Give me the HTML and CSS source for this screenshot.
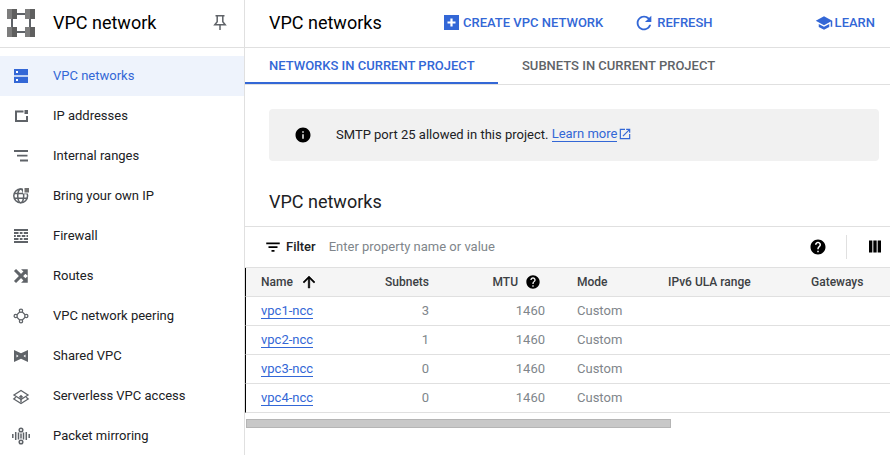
FILE: index.html
```html
<!DOCTYPE html>
<html lang="en">
<head>
<meta charset="utf-8">
<title>VPC networks</title>
<link rel="stylesheet" href="styles.css">
</head>
<body>
<div class="app">
  <aside class="sidebar">
    <div class="side-head">
      <svg class="logo" viewBox="0 0 28 28" width="28" height="28">
        <path fill="#5f6368" d="M10 4h8v2h-8zM10 22h8v2h-8zM4 10h2v8H4zM22 10h2v8h-2z"/>
        <path fill="#7d7d7d" d="M0 0h5v10H0zM18 0h5v10h-5zM0 18h5v10H0zM18 18h5v10h-5z"/>
        <path fill="#5f5f5f" d="M5 0h5v10H5zM23 0h5v10h-5zM5 18h5v10H5zM23 18h5v10h-5z"/>
      </svg>
      <span class="side-title">VPC network</span>
      <svg class="pin" viewBox="0 0 18 18" width="18" height="18"><path fill="none" stroke="#5f6368" stroke-width="1.500" d="M4.500 1.800h9M6.200 1.800v6L3.800 10.800h10.400L11.800 7.800v-6M9 10.800V16"/></svg>
    </div>
    <nav class="nav">
      <a class="nav-item active">
        <svg class="nav-icon" viewBox="0 0 18 18"><path fill="#3367d6" d="M2 2h14v6.200H2zM2 9.800h14V16H2z"/><path fill="#fff" d="M4 4h2v2H4zM4 12h2v2H4z"/></svg>
        <span>VPC networks</span></a>
      <a class="nav-item">
        <svg class="nav-icon" viewBox="0 0 18 18"><path fill="#5f6368" d="M3 3.500h8.500v2H5V13h9V9h2v6H3z"/><rect fill="#5f6368" x="12.500" y="3" width="3.500" height="4"/></svg>
        <span>IP addresses</span></a>
      <a class="nav-item">
        <svg class="nav-icon" viewBox="0 0 18 18"><path fill="#5f6368" d="M2 3h14v2H2zM5 7.800h10.500v1.800H5zM8 12.500h8v2H8z"/></svg>
        <span>Internal ranges</span></a>
      <a class="nav-item">
        <svg class="nav-icon" viewBox="0 0 18 18"><g fill="none" stroke="#5f6368" stroke-width="1.500"><circle cx="8.700" cy="8.800" r="6.900"/><ellipse cx="8.700" cy="8.800" rx="3" ry="6.900"/><path d="M2 6.400h13.400M2 11.200h13.400"/></g><rect x="11" y="0" width="7" height="6.500" fill="#fff"/><rect x="12.500" y="1" width="4.500" height="4.500" fill="#6f6f6f"/></svg>
        <span>Bring your own IP</span></a>
      <a class="nav-item">
        <svg class="nav-icon" viewBox="0 0 18 18"><path fill="#5f6368" d="M2 2h14v2H2zM2 14h14v2H2zM2 5h4.500v2H2zM7.800 5h2.700v2H7.800zM11.800 5H16v2h-4.200zM2 8h1.800v2H2zM5 8h3.500v2H5zM9.800 8h3.500v2H9.800zM14.500 8H16v2h-1.500zM2 11h4.500v2H2zM7.800 11h2.700v2H7.800zM11.800 11H16v2h-4.200z"/></svg>
        <span>Firewall</span></a>
      <a class="nav-item">
        <svg class="nav-icon" viewBox="0 0 24 24"><path fill="#5f6368" stroke="#5f6368" stroke-width="2" d="M10.590 9.170 5.410 4 4 5.410l5.170 5.170 1.420-1.410zM14.500 4l2.040 2.040L4 18.590 5.410 20 17.960 7.460 20 9.500V4h-5.500zm.33 9.410-1.410 1.410 3.130 3.130L14.500 20H20v-5.500l-2.040 2.040-3.130-3.130z"/></svg>
        <span>Routes</span></a>
      <a class="nav-item">
        <svg class="nav-icon" viewBox="0 0 18 18"><g fill="none" stroke="#5f6368" stroke-width="1.300"><circle cx="9" cy="3.700" r="1.600"/><circle cx="9" cy="14.300" r="1.600"/><circle cx="3.700" cy="9" r="1.600"/><circle cx="14.300" cy="9" r="1.600"/><path d="M7.900 4.800 4.800 7.900M10.100 4.800l3.100 3.100M4.800 10.100 7.900 13.200M13.200 10.100 10.100 13.200"/></g></svg>
        <span>VPC network peering</span></a>
      <a class="nav-item">
        <svg class="nav-icon" viewBox="0 0 18 18"><path fill="#5f6368" fill-rule="evenodd" d="M2 3l7 3.200L16 3v12l-7-3.200L2 15zM4.500 7.500v3L6.500 9zM13.500 7.500 11.500 9l2 1.500z"/></svg>
        <span>Shared VPC</span></a>
      <a class="nav-item">
        <svg class="nav-icon" viewBox="0 0 18 18"><g fill="none" stroke="#5f6368" stroke-width="1.300"><path d="M9 3.500 16 8 9 12.500 2 8z"/><path d="M3.800 10.300 1.800 12 9 16.500 16.200 12l-2-1.700"/></g><path fill="#5f6368" d="M8.300 9.500h1.400v6H8.300zM6.300 10.500 9 7.800l2.700 2.700z"/></svg>
        <span>Serverless VPC access</span></a>
      <a class="nav-item">
        <svg class="nav-icon" viewBox="0 0 18 18"><g fill="none" stroke="#5f6368" stroke-width="1.500"><circle cx="9" cy="3" r="1.800"/><circle cx="9" cy="15" r="1.800"/><path d="M.8 7v4M3.700 5v8M6.500 5.500v7M11.500 5.500v7M14.300 5v8M17.200 7v4M9 6.500v5"/></g></svg>
        <span>Packet mirroring</span></a>
    </nav>
  </aside>
  <main class="main">
    <header class="topbar">
      <h1 class="page-title">VPC networks</h1>
      <a class="action create">
        <svg viewBox="0 0 15 15" width="15" height="15"><path fill="#3367d6" d="M0 0h15v15H0z"/><path fill="#fff" d="M6.400 3.500h2.200v2.900h2.900v2.200H8.600v2.900H6.400V8.600H3.500V6.400h2.900z"/></svg>
        <span>CREATE VPC NETWORK</span></a>
      <a class="action refresh">
        <svg viewBox="0 0 24 24" width="22" height="22"><path fill="#3367d6" d="M17.650 6.350C16.200 4.900 14.210 4 12 4c-4.420 0-7.990 3.580-7.990 8s3.570 8 7.990 8c3.730 0 6.840-2.550 7.730-6h-2.080c-.82 2.330-3.040 4-5.650 4-3.310 0-6-2.690-6-6s2.690-6 6-6c1.660 0 3.140.69 4.220 1.780L13 11h7V4l-2.350 2.350z"/></svg>
        <span>REFRESH</span></a>
      <a class="action learn">
        <svg viewBox="0 0 24 24" width="18" height="18"><path fill="#3367d6" d="M5 13.180v4L12 21l7-3.820v-4L12 17l-7-3.820zM12 3 1 9l11 6 9-4.910V17h2V9L12 3z"/></svg>
        <span>LEARN</span></a>
    </header>
    <div class="tabs">
      <a class="tab active">NETWORKS IN CURRENT PROJECT</a>
      <a class="tab">SUBNETS IN CURRENT PROJECT</a>
    </div>
    <div class="banner">
      <svg viewBox="0 0 24 24" width="18" height="18"><path fill="#000" d="M12 2C6.480 2 2 6.480 2 12s4.480 10 10 10 10-4.480 10-10S17.520 2 12 2zm1 15h-2v-6h2v6zm0-8h-2V7h2v2z"/></svg>
      <p class="banner-text">SMTP port 25 allowed in this project. <a class="link">Learn more</a><svg class="ext" viewBox="0 0 24 24" width="14" height="14"><path fill="#3367d6" d="M19 19H5V5h7V3H3v18h18v-9h-2v7zM14 3v2h3.590l-9.830 9.830 1.410 1.410L19 6.410V10h2V3h-7z"/></svg></p>
    </div>
    <h2 class="section-title">VPC networks</h2>
    <div class="filter">
      <svg viewBox="0 0 24 24" width="18" height="18"><path fill="#000" d="M3 6h18v2.200H3zM6 11h12v2.200H6zM10 16h4v2.200h-4z"/></svg>
      <span class="filter-label">Filter</span>
      <span class="filter-hint">Enter property name or value</span>
      <svg class="filter-help" viewBox="0 0 24 24" width="18" height="18"><path fill="#000" d="M12 2C6.480 2 2 6.480 2 12s4.480 10 10 10 10-4.480 10-10S17.520 2 12 2zm1 17h-2v-2h2v2zm2.070-7.750-.9.920C13.450 12.900 13 13.500 13 15h-2v-.5c0-1.100.45-2.100 1.170-2.830l1.240-1.260c.37-.36.590-.86.590-1.410 0-1.100-.9-2-2-2s-2 .9-2 2H8c0-2.210 1.790-4 4-4s4 1.790 4 4c0 .88-.36 1.680-.93 2.250z"/></svg>
      <span class="filter-sep"></span>
      <svg class="filter-cols" viewBox="0 0 13 13" width="12" height="13"><path fill="#000" d="M0 0h3.600v13H0zM4.700 0h3.600v13H4.700zM9.400 0H13v13H9.400z"/></svg>
    </div>
    <div class="table-wrap">
      <table class="table">
        <colgroup><col class="c-name"><col class="c-sub"><col class="c-mtu"><col class="c-mode"><col class="c-ipv6"><col class="c-gw"></colgroup>
        <thead>
          <tr>
            <th><span class="th-sort">Name<svg viewBox="0 0 24 24" width="18" height="18"><path fill="#000" stroke="#000" stroke-width=".7" d="M4 12l1.410 1.410L11 7.830V20h2V7.830l5.580 5.590L20 12l-8-8-8 8z"/></svg></span></th>
            <th class="num">Subnets</th>
            <th class="num"><span class="th-help">MTU<svg viewBox="0 0 24 24" width="16" height="16"><path fill="#000" d="M12 2C6.480 2 2 6.480 2 12s4.480 10 10 10 10-4.480 10-10S17.520 2 12 2zm1 17h-2v-2h2v2zm2.070-7.750-.9.920C13.450 12.900 13 13.500 13 15h-2v-.5c0-1.100.45-2.100 1.170-2.830l1.240-1.260c.37-.36.590-.86.590-1.410 0-1.100-.9-2-2-2s-2 .9-2 2H8c0-2.210 1.790-4 4-4s4 1.790 4 4c0 .88-.36 1.680-.93 2.250z"/></svg></span></th>
            <th>Mode</th>
            <th>IPv6 ULA range</th>
            <th>Gateways</th>
          </tr>
        </thead>
        <tbody>
          <tr><td><a class="link">vpc1-ncc</a></td><td class="num">3</td><td class="num">1460</td><td>Custom</td><td></td><td></td></tr>
          <tr><td><a class="link">vpc2-ncc</a></td><td class="num">1</td><td class="num">1460</td><td>Custom</td><td></td><td></td></tr>
          <tr><td><a class="link">vpc3-ncc</a></td><td class="num">0</td><td class="num">1460</td><td>Custom</td><td></td><td></td></tr>
          <tr><td><a class="link">vpc4-ncc</a></td><td class="num">0</td><td class="num">1460</td><td>Custom</td><td></td><td></td></tr>
        </tbody>
      </table>
    </div>
    <div class="scroll"><div class="scroll-thumb"></div></div>
  </main>
</div>
</body>
</html>
```
FILE: styles.css
```css
* { box-sizing: border-box; }
html, body { margin: 0; height: 100%; overflow: hidden; background: #fff; }
body { font-family: Roboto, "Liberation Sans", sans-serif; font-size: 13px; color: #202124; }
a { text-decoration: none; }

.app { display: flex; height: 455px; width: 890px; }

.sidebar { width: 245px; flex: none; border-right: 1px solid #e0e0e0; }
.side-head { height: 48px; border-bottom: 1px solid #e0e0e0; display: flex; align-items: center; padding: 0 0 1px 7px; margin-bottom: 8px; }
.logo { flex: none; }
.side-title { font-size: 18px; margin: 0 0 1px 18px; color: #000; flex: 1; }
.pin { flex: none; margin-right: 15px; }

.nav { display: flex; flex-direction: column; }
.nav-item { display: flex; align-items: center; height: 40px; padding-left: 12px; color: #202124; }
.nav-item span { margin-bottom: 2px; }
.nav-item.active { background: #eef3fc; color: #3367d6; }
.nav-icon { width: 18px; height: 18px; flex: none; margin-right: 23px; }

.main { flex: 1; min-width: 0; display: flex; flex-direction: column; }

.topbar { height: 48px; border-bottom: 1px solid #e0e0e0; display: flex; align-items: center; padding: 0 0 2px 24px; }
.page-title { margin: 0; font-size: 18px; font-weight: 400; color: #000; width: 175px; }
.action { display: flex; align-items: center; gap: 4px; color: #3367d6; font-weight: 500; font-size: 13px; }
.refresh { margin-left: 30px; gap: 2px; }
.learn { margin-left: auto; margin-right: 15px; gap: 2px; }

.tabs { display: flex; height: 37px; border-bottom: 1px solid #e0e0e0; }
.tab { display: flex; align-items: center; padding: 0 24px 2px; font-weight: 500; font-size: 13px; color: #5f6368; height: 36px; white-space: nowrap; }
.tab.active { color: #3367d6; padding-bottom: 0; border-bottom: 2px solid #3367d6; width: 253px; }

.banner { margin: 24px 11px 0 24px; height: 52px; background: #f1f1f1; border-radius: 4px; display: flex; align-items: center; padding-left: 25px; }
.banner-text { margin: 0 0 2px 24px; color: #202124; display: flex; align-items: center; white-space: pre; }
.link { color: #3367d6; border-bottom: 1px solid #3367d6; line-height: 14px; }
.ext { margin-left: 1px; }

.section-title { margin: 30px 0 0 24px; font-size: 18px; font-weight: 400; line-height: 21px; color: #202124; height: 35px; }

.filter { height: 42px; border-top: 1px solid #e0e0e0; border-bottom: 1px solid #e0e0e0; display: flex; align-items: center; padding: 0 0 1px 19px; }
.filter-label { margin-left: 4px; font-weight: 500; color: #202124; }
.filter-hint { margin-left: 13px; color: #80868b; flex: 1; }
.filter-help { flex: none; }
.filter-sep { width: 1px; height: 24px; background: #e0e0e0; margin: 0 22px 0 19px; }
.filter-cols { margin-right: 9px; }

.table-wrap { overflow: hidden; width: 645px; }
.table { border-collapse: separate; border-spacing: 0; table-layout: fixed; width: 690px; }
.c-name { width: 105px; }
.c-sub { width: 95px; }
.c-mtu { width: 116px; }
.c-mode { width: 91px; }
.c-ipv6 { width: 143px; }
.c-gw { width: 140px; }
.table th, .table td { height: 29px; padding: 0 16px; border-bottom: 1px solid #e0e0e0; text-align: left; white-space: nowrap; }
.table th { background: #f5f5f5; font-size: 12px; font-weight: 500; color: #3c4043; }
.table td { font-size: 13px; color: #80868b; padding-bottom: 2px; }
.table th:first-child, .table td:first-child { border-left: 1px solid #000; padding-left: 15px; }
.table .num { text-align: right; }
.th-sort { display: inline-flex; align-items: center; gap: 7px; }
.th-help { display: inline-flex; align-items: center; gap: 7px; margin-right: 4px; }

.scroll { margin: 6px 0 0 1px; height: 9px; }
.scroll-thumb { width: 425px; height: 9px; background: #c8c8c8; border: 1px solid #b5b5b5; }
```
